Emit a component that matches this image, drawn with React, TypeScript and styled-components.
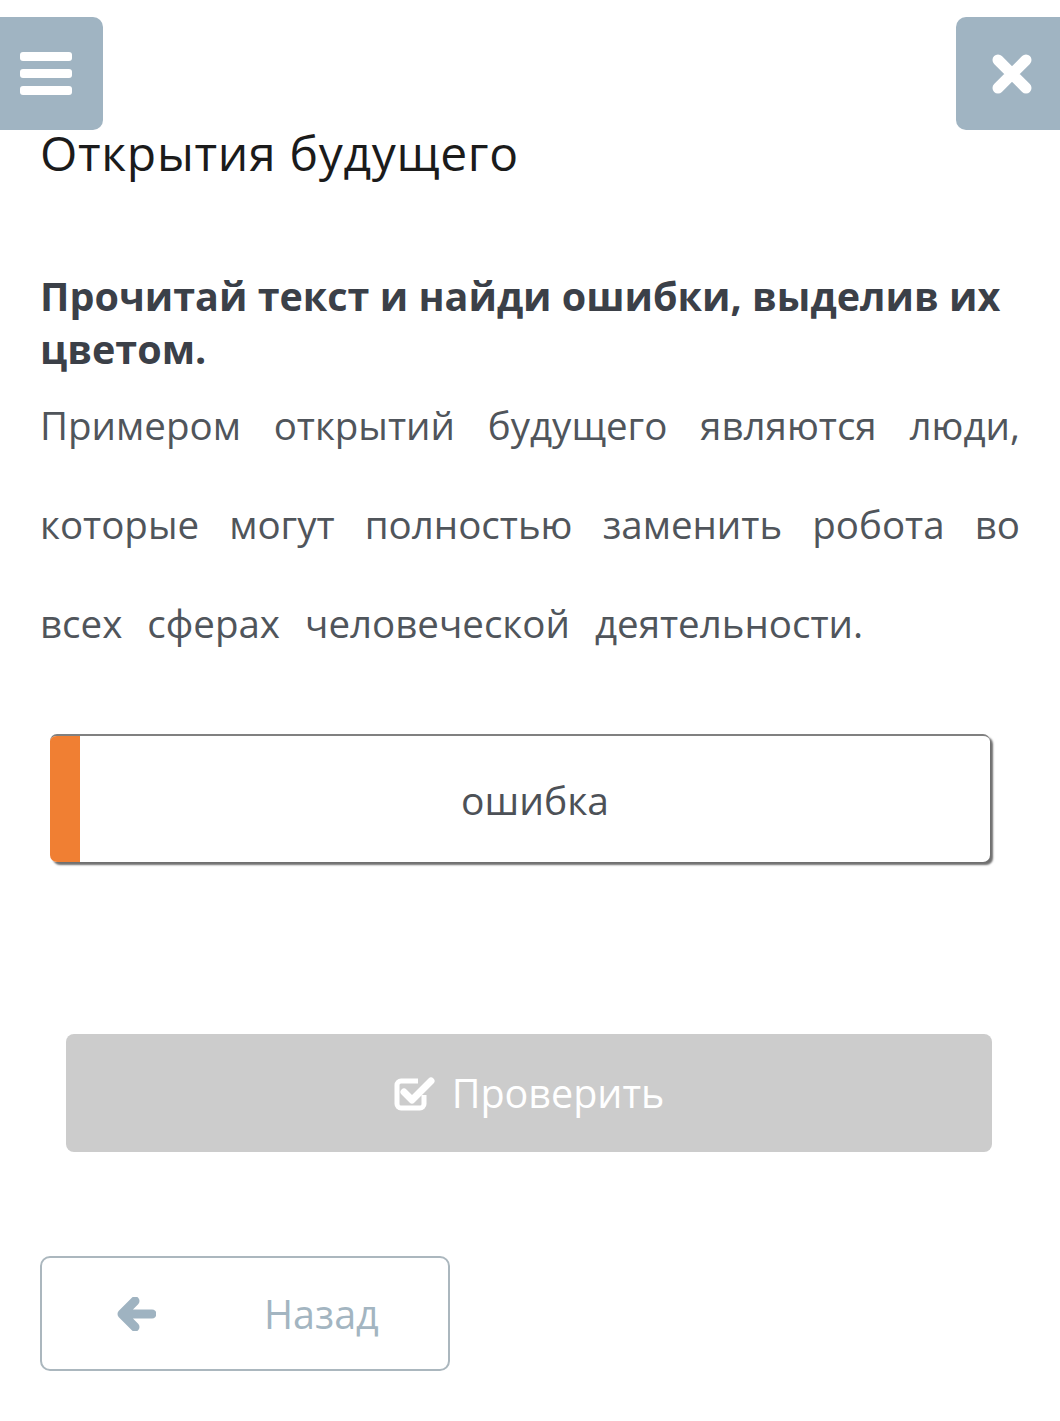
import React from "react";
import styled, { createGlobalStyle } from "styled-components";

const GlobalStyle = createGlobalStyle`
	html, body {
		margin: 0;
		padding: 0;
		background: #ffffff;
		overflow-x: hidden;
	}
	body {
		font-family: "Open Sans", "Noto Sans", "Liberation Sans", sans-serif;
	}
`;

const App = () => {
	return (
		<Page>
			<GlobalStyle />
			<Header>
				<MenuButton aria-label="menu">
					<svg width="52" height="43" viewBox="0 0 52 43">
						<rect x="0" y="0" width="52" height="9" rx="3" fill="#fff" />
						<rect x="0" y="17" width="52" height="9" rx="3" fill="#fff" />
						<rect x="0" y="34" width="52" height="9" rx="3" fill="#fff" />
					</svg>
				</MenuButton>
				<CloseButton aria-label="close">
					<svg width="42" height="42" viewBox="0 0 42 42">
						<path d="M7 7 L35 35 M35 7 L7 35" stroke="#fff" strokeWidth="11" strokeLinecap="round" />
					</svg>
				</CloseButton>
			</Header>
			<Content>
				<Title>Открытия будущего</Title>
				<Task>Прочитай текст и найди ошибки, выделив их цветом.</Task>
				<Passage>
					Примером открытий будущего являются люди, которые могут полностью заменить робота во всех сферах человеческой деятельности.
				</Passage>
				<MarkerCard>
					<MarkerStripe />
					<MarkerLabel>ошибка</MarkerLabel>
				</MarkerCard>
				<CheckButton>
					<svg width="42" height="38" viewBox="0 0 42 38">
						<path
							d="M30 21 V30 a4 4 0 0 1 -4 4 H7 a4 4 0 0 1 -4 -4 V11 a4 4 0 0 1 4 -4 H24"
							fill="none"
							stroke="#fff"
							strokeWidth="5"
							strokeLinejoin="round"
						/>
						<path d="M10 18 L18 26 L37 7" fill="none" stroke="#fff" strokeWidth="7" strokeLinecap="round" strokeLinejoin="round" />
					</svg>
					Проверить
				</CheckButton>
				<BackButton>
					<BackIcon>
						<svg width="40" height="34" viewBox="0 0 40 34">
							<path d="M19 4 L6 17 L19 30 M7 17 H36" fill="none" stroke="#9fb3c1" strokeWidth="9" strokeLinecap="round" strokeLinejoin="round" />
						</svg>
					</BackIcon>
					<BackLabel>Назад</BackLabel>
				</BackButton>
			</Content>
		</Page>
	);
};

const Page = styled.div`
	width: 1060px;
	min-height: 1421px;
	overflow: hidden;
`;

const Header = styled.div`
	display: flex;
	justify-content: space-between;
	align-items: center;
	margin-top: 17px;
	height: 113px;
`;

const ToolButton = styled.button`
	display: flex;
	align-items: center;
	justify-content: center;
	height: 113px;
	width: 114px;
	border: none;
	background: #a0b4c2;
	border-radius: 10px;
	padding: 0;
	cursor: pointer;
`;

const MenuButton = styled(ToolButton)`
	margin-left: -11px;
`;

const CloseButton = styled(ToolButton)`
	margin-right: -10px;
	padding-right: 2px;
`;

const Content = styled.div`
	padding: 0 40px;
	display: flex;
	flex-direction: column;
	align-items: flex-start;
`;

const Title = styled.h1`
	margin: 1px 0 0;
	font-size: 48px;
	line-height: 44px;
	letter-spacing: 0.7px;
	font-weight: 400;
	color: #1b1b1b;
`;

const Task = styled.h2`
	margin: 95px 0 0;
	font-size: 39.5px;
	line-height: 53px;
	font-weight: 700;
	color: #3b4048;
`;

const Passage = styled.p`
	margin: 0;
	width: 980px;
	font-size: 38.5px;
	line-height: 99px;
	color: #50555b;
	text-align: justify;
	word-spacing: 15px;
`;

const MarkerCard = styled.div`
	display: flex;
	margin: 61px 0 0 10px;
	width: 940px;
	height: 128px;
	box-sizing: border-box;
	border-top: 2px solid #808080;
	border-radius: 7px;
	background: #fff;
	box-shadow: 3px 3px 2px #6f6f6f;
	overflow: hidden;
`;

const MarkerStripe = styled.div`
	width: 30px;
	background: #f07f33;
	margin-top: -2px;
`;

const MarkerLabel = styled.div`
	flex: 1;
	display: flex;
	align-items: center;
	justify-content: center;
	font-size: 39px;
	color: #4d5157;
`;

const CheckButton = styled.button`
	display: flex;
	align-items: center;
	justify-content: center;
	gap: 16px;
	margin: 172px 0 0 26px;
	width: 926px;
	height: 118px;
	border: none;
	border-radius: 8px;
	background: #cccccc;
	color: #ffffff;
	font-family: "Open Sans", "Noto Sans", sans-serif;
	font-size: 39.5px;
	cursor: pointer;
`;

const BackButton = styled.button`
	display: flex;
	align-items: center;
	margin-top: 104px;
	width: 410px;
	height: 115px;
	box-sizing: border-box;
	border: 2px solid #abb7be;
	border-radius: 10px;
	background: #ffffff;
	padding: 0 0 0 74px;
	font-family: "Open Sans", "Noto Sans", sans-serif;
	cursor: pointer;
`;

const BackIcon = styled.span`
	display: flex;
	width: 148px;
`;

const BackLabel = styled.span`
	font-size: 39.5px;
	color: #a3b5c1;
`;

export default App;
